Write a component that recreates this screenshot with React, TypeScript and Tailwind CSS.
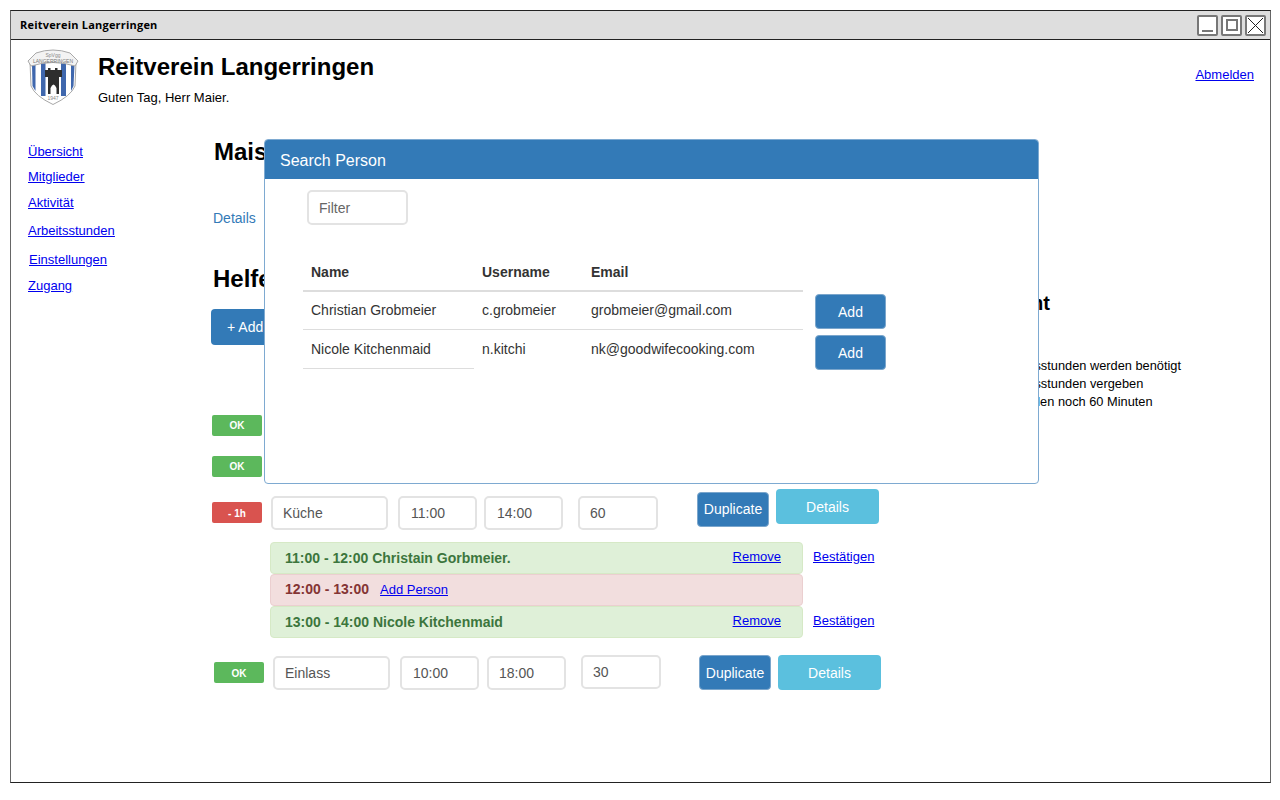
const sans = "font-['Liberation_Sans',Arial,sans-serif]";

function Logo() {
  return (
    <svg width="52" height="58" viewBox="0 0 52 58" className="shrink-0 -mt-px">
      <path d="M3 14 L4 38 Q8 48 26 56.500 Q44 48 48 38 L49 14 Q26 6 3 14 Z" fill="#fff" stroke="#a8a8a8" strokeWidth="1" />
      <path d="M5 17 H8.500 V43 L5.500 38 Z" fill="#3f67ad" />
      <rect x="14" y="15" width="4.500" height="33" fill="#3f67ad" />
      <rect x="34" y="15" width="5" height="33" fill="#3f67ad" />
      <path d="M44 17 H47.500 L46.500 38 L44 43 Z" fill="#3f67ad" />
      <path d="M18 22 H21 V20 H23.500 V22 H28 V20 H30.500 V22 H35 V29 H32 V46 H29.500 V40 Q26.500 33 23.500 40 V46 H21 V29 H18 Z" fill="#2e2e2e" />
      <path d="M1 13 L9 5 Q26 -1 43 5 L51 13 L48 18 Q26 11 4 18 Z" fill="#f3f3f3" stroke="#a8a8a8" strokeWidth="1" />
      <text x="26" y="8.500" textAnchor="middle" fontSize="5" fill="#8a8a8a" fontFamily="Liberation Sans">SpVgg</text>
      <text x="26" y="14.500" textAnchor="middle" fontSize="5" fill="#777" fontFamily="Liberation Sans">LANGERRINGEN</text>
      <text x="26" y="51.500" textAnchor="middle" fontSize="5" fill="#888" fontFamily="Liberation Sans">1947</text>
    </svg>
  );
}

function Field({ value, className }: { value: string; className: string }) {
  return (
    <div className={`h-[34px] shrink-0 flex items-center text-sm text-[#555] bg-white border-2 border-[#e3e3e3] rounded-[5px] ${className}`}>
      {value}
    </div>
  );
}

function Badge({ label, red }: { label: string; red?: boolean }) {
  return (
    <div className={`w-[50px] h-[21px] pt-px shrink-0 rounded-[2px] flex items-center justify-center text-[10px] font-bold text-white ${red ? "bg-[#d9534f]" : "bg-[#5cb85c]"}`}>
      {label}
    </div>
  );
}

function Slot({ time, person, red }: { time: string; person?: string; red?: boolean }) {
  return (
    <div className="flex items-center">
      <div className={`w-[533px] h-[32px] rounded-[4px] flex items-center justify-between pl-[14px] pr-[21px] text-sm font-bold border ${red ? "bg-[#f2dede] border-[#ebcfd0] text-[#843534]" : "bg-[#dff0d8] border-[#d6e9c6] text-[#3c763d]"}`}>
        {red ? (
          <span>
            {time}
            <a href="#" className="ml-[11px] text-[13px] font-normal text-[#0000ee] underline">Add Person</a>
          </span>
        ) : (
          <>
            <span>{time} {person}</span>
            <a href="#" className="text-[13px] font-normal text-[#0000ee] underline">Remove</a>
          </>
        )}
      </div>
      {!red && <a href="#" className="ml-[10px] text-[13px] text-[#0000ee] underline -translate-y-px">Bestätigen</a>}
    </div>
  );
}

function SearchModal() {
  return (
    <div className="absolute left-[253px] top-[128px] w-[775px] h-[345px] bg-white border border-[#7eaad1] rounded-[4px] overflow-hidden">
      <div className="h-[39px] pt-[2px] bg-[#337ab7] flex items-center pl-[15px] text-base text-white">Search Person</div>
      <div className="ml-[42px] mt-[11px] w-[101px] h-[35px] flex items-center pl-[10px] text-sm text-[#666] border-2 border-[#e3e3e3] rounded-[5px]">Filter</div>
      <div className="flex ml-[38px] mt-[29px]">
        <div className="w-[500px] text-sm text-[#333]">
          <div className="h-[38px] flex items-center font-bold border-b-2 border-[#dddddd]">
            <div className="w-[179px] pl-2">Name</div>
            <div className="w-[109px]">Username</div>
            <div>Email</div>
          </div>
          <div className="h-[38px] flex items-center pb-[2px] border-b border-[#dddddd]">
            <div className="w-[179px] pl-2">Christian Grobmeier</div>
            <div className="w-[109px]">c.grobmeier</div>
            <div>grobmeier@gmail.com</div>
          </div>
          <div className="h-[39px] flex items-center">
            <div className="w-[171px] h-full flex items-center pl-2 mr-2 border-b border-[#dddddd]">Nicole Kitchenmaid</div>
            <div className="w-[109px] pb-[2px]">n.kitchi</div>
            <div className="pb-[2px]">nk@goodwifecooking.com</div>
          </div>
        </div>
        <div className="ml-[12px] mt-[40px] flex flex-col gap-[6px]">
          <div className="w-[71px] h-[35px] rounded-[4px] bg-[#337ab7] border border-[#7ba6cc] text-sm text-white flex items-center justify-center">Add</div>
          <div className="w-[71px] h-[35px] rounded-[4px] bg-[#337ab7] border border-[#7ba6cc] text-sm text-white flex items-center justify-center">Add</div>
        </div>
      </div>
    </div>
  );
}

export default function App() {
  return (
    <div className={`w-[1280px] h-[800px] bg-white pt-[10px] pl-[10px] ${sans}`}>
      <div className="relative w-[1261px] h-[773px] border border-[#222] border-l-[#666] border-r-[#666]">
        <div className="h-[29px] bg-[#dedede] border-b border-[#222] flex items-center justify-between pl-[9px] pr-[4px]">
          <span className="pt-px font-['Open_Sans',sans-serif] text-[11px] font-bold tracking-[0.2px] text-black">Reitverein Langerringen</span>
          <div className="flex gap-[3px]">
            <div className="w-[21px] h-[21px] bg-white border-2 border-[#777] rounded-[2px] flex items-end justify-center pb-[2px]">
              <div className="w-[11px] h-[2px] bg-[#777]" />
            </div>
            <div className="w-[21px] h-[21px] bg-white border-2 border-[#777] rounded-[2px] flex items-center justify-center">
              <div className="w-[12px] h-[12px] border-2 border-[#777]" />
            </div>
            <div className="w-[21px] h-[21px] bg-white border-2 border-[#777] rounded-[2px] flex items-center justify-center">
              <svg width="17" height="17" viewBox="0 0 17 17"><path d="M1 1 L16 16 M16 1 L1 16" stroke="#222" strokeWidth="1" /></svg>
            </div>
          </div>
        </div>

        <div className="flex pl-[16px] pr-[16px] pt-[9px]">
          <Logo />
          <div className="ml-[19px] flex-1">
            <h1 className="text-2xl leading-[36px] font-bold text-black">Reitverein Langerringen</h1>
            <p className="mt-[3px] text-[13px] text-black">Guten Tag, Herr Maier.</p>
          </div>
          <a href="#" className="mt-[16px] text-[13px] text-[#0000ee] underline">Abmelden</a>
        </div>

        <div className="flex mt-[17px]">
          <nav className="w-[201px] shrink-0 pl-[17px] pt-[17px] text-[13px] leading-[20px] text-[#0000ee] underline flex flex-col items-start">
            <a href="#">Übersicht</a>
            <a href="#" className="mt-[5px]">Mitglieder</a>
            <a href="#" className="mt-[6px]">Aktivität</a>
            <a href="#" className="mt-[8px]">Arbeitsstunden</a>
            <a href="#" className="mt-[9px] ml-px">Einstellungen</a>
            <a href="#" className="mt-[6px]">Zugang</a>
          </nav>

          <main className="w-[700px] shrink-0 text-black">
            <h2 className="ml-[2px] mt-[9px] text-2xl leading-[36px] font-bold">Maisfest</h2>
            <a href="#" className="block ml-px mt-[38px] text-sm text-[#337ab7]">Details</a>
            <h2 className="ml-px mt-[33px] text-2xl leading-[36px] font-bold">Helfer</h2>
            <div className="mt-[12px] w-[90px] h-[36px] -ml-px pl-4 flex items-center rounded-[4px] bg-[#337ab7] text-sm text-white">+ Add</div>

            <div className="mt-[70px]"><Badge label="OK" /></div>
            <div className="mt-[20px]"><Badge label="OK" /></div>

            <div className="mt-[19px] flex items-center h-[34px]">
              <Badge label="- 1h" red />
              <Field value="Küche" className="ml-[9px] w-[117px] pl-[10px]" />
              <Field value="11:00" className="ml-[10px] w-[79px] pl-[11px]" />
              <Field value="14:00" className="ml-[7px] w-[79px] pl-[11px]" />
              <Field value="60" className="ml-[15px] w-[80px] pl-[10px]" />
              <div className="ml-[39px] w-[72px] h-[35px] -mt-[7px] rounded-[4px] bg-[#337ab7] border border-[#7ba6cc] text-sm text-white flex items-center justify-center">Duplicate</div>
              <div className="ml-[7px] w-[103px] h-[35px] -mt-[12px] rounded-[4px] bg-[#5bc0de] text-sm text-white flex items-center justify-center">Details</div>
            </div>

            <div className="ml-[58px] mt-[12px] flex flex-col">
              <Slot time="11:00 - 12:00" person="Christain Gorbmeier." />
              <Slot time="12:00 - 13:00" red />
              <Slot time="13:00 - 14:00" person="Nicole Kitchenmaid" />
            </div>

            <div className="ml-[2px] mt-[18px] flex items-center h-[34px]">
              <Badge label="OK" />
              <Field value="Einlass" className="ml-[9px] w-[117px] pl-[10px]" />
              <Field value="10:00" className="ml-[10px] w-[79px] pl-[11px]" />
              <Field value="18:00" className="ml-[8px] w-[79px] pl-[10px]" />
              <Field value="30" className="ml-[15px] w-[80px] pl-[10px] -mt-[2px]" />
              <div className="ml-[38px] w-[72px] h-[35px] rounded-[4px] bg-[#337ab7] border border-[#7ba6cc] text-sm text-white flex items-center justify-center">Duplicate</div>
              <div className="ml-[7px] w-[103px] h-[35px] rounded-[4px] bg-[#5bc0de] text-sm text-white flex items-center justify-center">Details</div>
            </div>
          </main>

          <aside className="flex-1 pt-[164px] text-black">
            <h3 className="w-[138px] text-xl leading-[28px] font-bold text-right whitespace-nowrap">Arbeit gesamt</h3>
            <div className="mt-[40px] ml-[89px] text-[12.800px] leading-[18px] whitespace-nowrap">
              <p>Arbeitsstunden werden benötigt</p>
              <p>Arbeitsstunden vergeben</p>
              <p>Es fehlen noch 60 Minuten</p>
            </div>
          </aside>
        </div>

        <SearchModal />
      </div>
    </div>
  );
}
